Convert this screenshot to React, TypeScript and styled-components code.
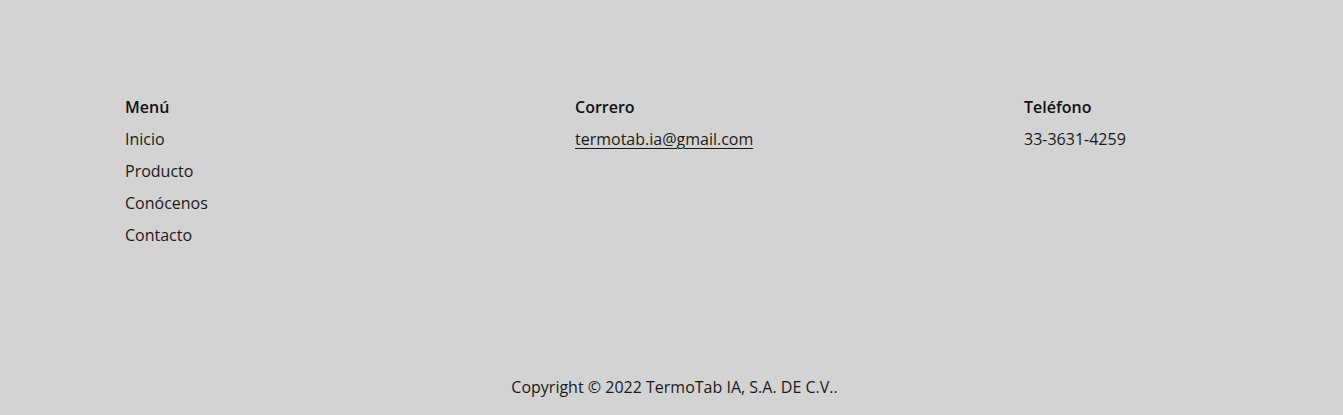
import { createGlobalStyle, styled } from "styled-components";

const GlobalStyle = createGlobalStyle`
  html, body {
    margin: 0;
    padding: 0;
    background: #d3d3d3;
  }
  body {
    font-family: "Open Sans", "Liberation Sans", sans-serif;
    font-size: 16px;
    color: #111;
  }
`;

const Footer = styled.footer`
  background: #d3d3d3;
  min-height: 415px;
  padding-top: 91px;
  box-sizing: border-box;
`;

const Columns = styled.div`
  display: grid;
  grid-template-columns: 450px 449px 1fr;
  padding-left: 125px;
`;

const Column = styled.div`
  display: flex;
  flex-direction: column;
`;

const Heading = styled.h4`
  margin: 0;
  font-size: 16px;
  font-weight: 600;
  line-height: 32px;
  color: #111;
`;

const Item = styled.a<{ $underline?: boolean }>`
  line-height: 32px;
  color: #1a1a1a;
  text-decoration: ${(p) => (p.$underline ? "underline" : "none")};
  text-underline-offset: 3px;
  width: fit-content;
`;

const Copyright = styled.p`
  margin: 120px 0 0;
  padding-left: 6px;
  text-align: center;
  line-height: 32px;
  color: #1a1a1a;
`;

const menu = ["Inicio", "Producto", "Conócenos", "Contacto"];

export default function App() {
  return (
    <>
      <GlobalStyle />
      <Footer>
        <Columns>
          <Column>
            <Heading>Menú</Heading>
            {menu.map((label) => (
              <Item key={label}>{label}</Item>
            ))}
          </Column>
          <Column>
            <Heading>Correro</Heading>
            <Item $underline>termotab.ia@gmail.com</Item>
          </Column>
          <Column>
            <Heading>Teléfono</Heading>
            <Item>33-3631-4259</Item>
          </Column>
        </Columns>
        <Copyright>Copyright © 2022 TermoTab IA, S.A. DE C.V..</Copyright>
      </Footer>
    </>
  );
}
